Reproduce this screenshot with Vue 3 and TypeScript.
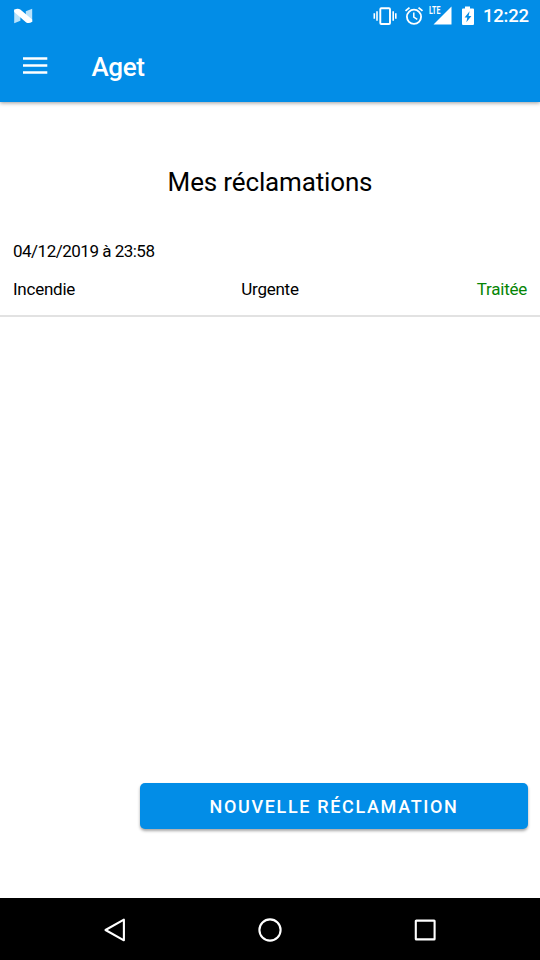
<script setup lang="ts">
interface Claim {
  date: string
  type: string
  priority: string
  status: string
}

const claims: Claim[] = [
  { date: '04/12/2019 à 23:58', type: 'Incendie', priority: 'Urgente', status: 'Traitée' },
]
</script>

<template>
  <div class="screen">
    <header class="header">
      <div class="status-bar">
        <svg class="nougat" width="20" height="16" viewBox="0 0 20 16">
          <path d="M1.200 1.500 7.400 4V12.800L1.200 15.200Z" fill="#b9e2fb" />
          <path d="M12.800 3.200 19.200 .800V14L12.800 12Z" fill="#b9e2fb" />
          <path d="M1.200 1.800Q4.500-.2 7.300 1.400L19.200 11.600V13.800Q16 15.800 13.200 14.400L1.200 3.900Z" fill="#fff" />
        </svg>
        <div class="indicators">
          <svg width="24" height="20" viewBox="0 0 24 20">
            <rect x="7.300" y="2.200" width="9.700" height="15.800" rx="1" fill="none" stroke="#fff" stroke-width="1.900" />
            <path d="M1.300 7.200v5.600M4 5.200v9.600M20.200 5.200v9.600M22.800 7.200v5.600" fill="none" stroke="#fff" stroke-width="1.600" />
          </svg>
          <svg class="alarm" width="20" height="20" viewBox="0 0 20 20">
            <circle cx="10" cy="10.800" r="7.100" fill="none" stroke="#fff" stroke-width="1.800" />
            <path d="M1.500 4.900 5.500 1.600M18.500 4.900 14.500 1.600" fill="none" stroke="#fff" stroke-width="1.800" />
            <path d="M9.800 6.400v4.800l3.500 2.200" fill="none" stroke="#fff" stroke-width="1.500" />
          </svg>
          <div class="network">
            <span class="lte">LTE</span>
            <svg width="23" height="20" viewBox="0 0 23 20">
              <path d="M22.500 .500V18.400H4.500Z" fill="#fff" />
            </svg>
          </div>
          <svg class="battery" width="14" height="20" viewBox="0 0 14 20">
            <path
              fill="#fff"
              fill-rule="evenodd"
              d="M4 .500h5v1.900H12a1 1 0 0 1 1 1V18a1 1 0 0 1-1 1H2a1 1 0 0 1-1-1V3.400a1 1 0 0 1 1-1h2ZM8.600 5.300 3.600 11.400h2.700l-.9 4.800 5-6.200H7.600Z"
            />
          </svg>
          <span class="clock">12:22</span>
        </div>
      </div>
      <div class="app-bar">
        <svg class="menu" width="26" height="20" viewBox="0 0 26 20">
          <path d="M1 2.500h24.300M1 9.500h24.300M1 16.500h24.300" stroke="#fff" stroke-width="2.700" />
        </svg>
        <h1 class="app-title">Aget</h1>
      </div>
    </header>

    <main class="content">
      <h2 class="heading">Mes réclamations</h2>
      <ul class="claims">
        <li v-for="claim in claims" :key="claim.date" class="claim">
          <div class="date">{{ claim.date }}</div>
          <div class="details">
            <span>{{ claim.type }}</span>
            <span class="priority">{{ claim.priority }}</span>
            <span class="state">{{ claim.status }}</span>
          </div>
        </li>
      </ul>
      <button type="button" class="new-claim">NOUVELLE RÉCLAMATION</button>
    </main>

    <nav class="nav-bar">
      <svg width="26" height="26" viewBox="0 0 26 26">
        <path d="M21.900 2.700v20.600L3.500 13Z" fill="none" stroke="#fff" stroke-width="2.100" stroke-linejoin="round" />
      </svg>
      <svg width="26" height="26" viewBox="0 0 26 26">
        <circle cx="13" cy="13" r="10.600" fill="none" stroke="#fff" stroke-width="2.100" />
      </svg>
      <svg width="26" height="26" viewBox="0 0 26 26">
        <rect x="3.800" y="3.600" width="18.800" height="18.800" rx="0.500" fill="none" stroke="#fff" stroke-width="2.100" />
      </svg>
    </nav>
  </div>
</template>

<style>
body {
  background: #fff;
}
</style>

<style scoped>
.screen {
  display: flex;
  flex-direction: column;
  width: 540px;
  height: 960px;
  overflow: hidden;
  background: #fff;
  color: #000;
  font-family: Roboto, sans-serif;
}

svg {
  display: block;
  flex: none;
}

.header {
  flex: none;
  height: 102px;
  background: #028de7;
  color: #fff;
  box-shadow: 0 1px 4px rgba(0, 0, 0, 0.4);
}

.status-bar {
  display: flex;
  justify-content: space-between;
  align-items: center;
  height: 32px;
  padding: 0 11.2px 0 13px;
}

.indicators {
  display: flex;
  align-items: center;
}

.alarm {
  margin-left: 6.5px;
}

.network {
  position: relative;
  margin-left: 5.5px;
}

.lte {
  position: absolute;
  left: 0;
  top: -1px;
  font-size: 10.5px;
  font-weight: 700;
  line-height: 11px;
  transform: scaleX(0.67);
  transform-origin: left;
}

.battery {
  margin-left: 8.5px;
}

.clock {
  margin-left: 8px;
  font-size: 18.5px;
  font-weight: 500;
  line-height: 32px;
  letter-spacing: -0.2px;
}

.app-bar {
  display: flex;
  align-items: center;
  height: 70px;
  padding: 0 22px;
}

.menu {
  margin-top: -3px;
}

.app-title {
  margin: 0 0 0 43.5px;
  font-size: 26px;
  font-weight: 500;
  line-height: 70px;
  letter-spacing: -0.4px;
}

.content {
  display: flex;
  flex: 1;
  flex-direction: column;
  padding-top: 60px;
}

.heading {
  margin: 0;
  font-size: 26px;
  font-weight: 400;
  line-height: 40px;
  letter-spacing: -0.15px;
  text-align: center;
}

.claims {
  margin: 29px 0 0;
  padding: 0;
  list-style: none;
}

.claim {
  padding: 9px 13px 15px;
  border-bottom: 2px solid #e2e2e2;
  font-size: 17px;
  line-height: 22px;
  letter-spacing: -0.25px;
}

.date {
  letter-spacing: -0.5px;
}

.details {
  display: grid;
  grid-template-columns: 1fr 1fr 1fr;
  margin-top: 16px;
}

.priority {
  text-align: center;
}

.state {
  color: #058505;
  text-align: right;
}

.new-claim {
  width: 388px;
  height: 46px;
  margin: auto 12px 69px auto;
  padding: 1px 0 0;
  border: 0;
  border-radius: 5px;
  background: #028de7;
  box-shadow: 0 2px 3px rgba(0, 0, 0, 0.35);
  color: #fff;
  font: 500 18px/45px Roboto, sans-serif;
  letter-spacing: 1.66px;
}

.nav-bar {
  display: flex;
  flex: none;
  justify-content: space-between;
  align-items: center;
  height: 62px;
  padding: 1px 102px 0;
  box-sizing: border-box;
  background: #000;
}
</style>
